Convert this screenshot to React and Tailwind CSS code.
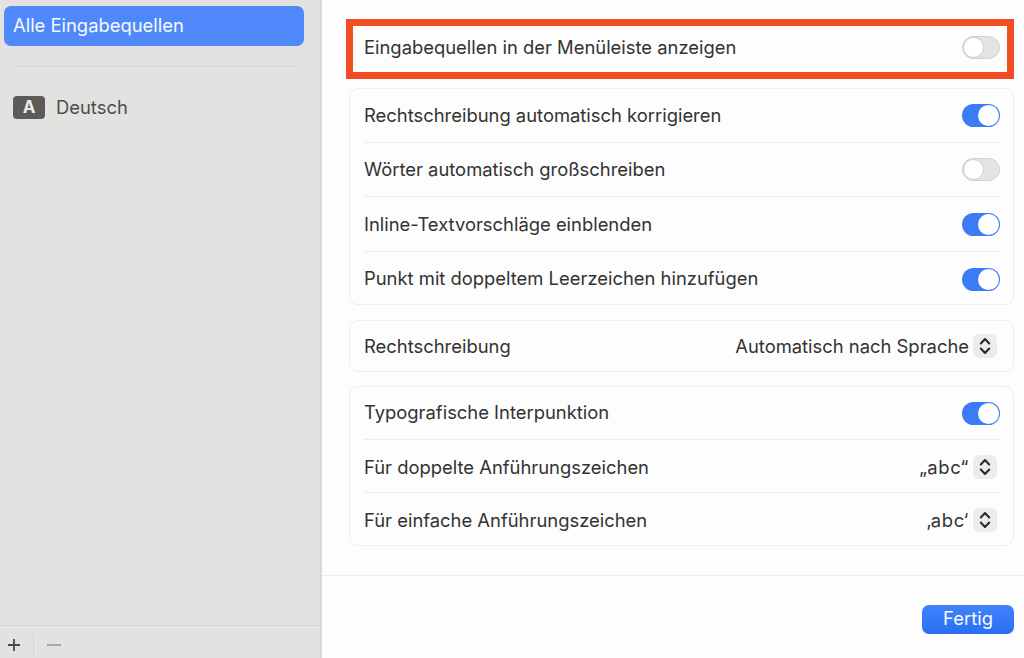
import React from "react";

function Toggle({ on }) {
  return on ? (
    <div className="flex h-[23px] w-[38px] shrink-0 items-center justify-end rounded-full bg-[#3b7bf6] pr-px">
      <div className="h-[21px] w-[21px] rounded-full bg-white" />
    </div>
  ) : (
    <div className="flex h-[23px] w-[38px] shrink-0 items-center rounded-full border border-[#d0d0ce] bg-[#e4e4e2]">
      <div className="h-[21px] w-[21px] rounded-full border border-[#cfcfcf] bg-white" />
    </div>
  );
}

function Stepper() {
  return (
    <div className="mr-[3px] flex h-[24px] w-[24px] shrink-0 items-center justify-center rounded-[6px] bg-[#ececec]">
      <svg width="14" height="20" viewBox="0 0 14 20" fill="none" stroke="#2c2c2c" strokeWidth="2.1" strokeLinecap="round" strokeLinejoin="round">
        <path d="M2.8 7.5 7 3l4.2 4.5" />
        <path d="M2.8 12.5 7 17l4.2-4.5" />
      </svg>
    </div>
  );
}

function Row({ label, h, children }) {
  return (
    <div className={`flex items-center justify-between ${h}`}>
      <span className="whitespace-nowrap">{label}</span>
      {children}
    </div>
  );
}

const Divider = () => <div className="h-px bg-[#ececeb]" />;

const Card = ({ children }) => (
  <div className="rounded-[9px] border border-[#eeeeed] bg-[#fdfdfd] pl-[14px] pr-[13px]">{children}</div>
);

export default function App() {
  return (
    <div className="flex h-[658px] w-[1024px] overflow-hidden bg-[#fdfdfd] font-['Inter',sans-serif] text-[18.4px] text-[#333333]">
      <aside className="flex h-full w-[322px] shrink-0 flex-col border-r-2 border-[#dad9d7] bg-[#e3e2e0]">
        <div className="flex-1 px-[4px] pt-[6px]">
          <div className="flex h-[40px] w-[300px] items-center rounded-[7px] bg-[#4f88fb] pl-[9px] text-[#f6f9ff]">
            Alle Eingabequellen
          </div>
          <div className="mx-[9px] mt-[20px] h-px w-[283px] bg-[#d6d5d3]" />
          <div className="mt-[27px] flex items-center gap-[11px] pl-[9px] text-[#4e4d4b]">
            <div className="flex h-[23px] w-[32px] items-center justify-center rounded-[4px] bg-[#5c5b59] text-[17px] font-bold text-[#ecebe9]">
              A
            </div>
            Deutsch
          </div>
        </div>
        <div className="flex h-[33px] items-center border-t border-[#d3d2d0] pt-[5px]">
          <div className="flex h-[24px] w-[34px] items-center justify-start border-r border-[#d3d2d0] pl-[7px]">
            <svg width="14" height="14" viewBox="0 0 14 14" stroke="#4a4a4a" strokeWidth="1.8" fill="none">
              <path d="M7 1v12M1 7h12" />
            </svg>
          </div>
          <div className="flex w-[40px] items-center justify-center">
            <svg width="14" height="14" viewBox="0 0 14 14" stroke="#a3a2a0" strokeWidth="1.8" fill="none">
              <path d="M0 7h14" />
            </svg>
          </div>
        </div>
      </aside>

      <main className="flex min-w-0 flex-1 flex-col">
        <div className="flex flex-1 flex-col pl-[24px] pr-[10px] pt-[19px]">
          <div className="border-[7px] border-[#f04e23] bg-[#fdfdfd] pl-[11px] pr-[7px]">
            <Row label="Eingabequellen in der Menüleiste anzeigen" h="h-[46px] pb-[3px]">
              <Toggle />
            </Row>
          </div>

          <div className="mt-[9px] pl-[3px]">
            <Card>
              <Row label="Rechtschreibung automatisch korrigieren" h="h-[53px]"><Toggle on /></Row>
              <Divider />
              <Row label="Wörter automatisch großschreiben" h="h-[53px]"><Toggle /></Row>
              <Divider />
              <Row label="Inline-Textvorschläge einblenden" h="h-[54px] pt-px"><Toggle on /></Row>
              <Divider />
              <Row label="Punkt mit doppeltem Leerzeichen hinzufügen" h="h-[52px] pt-[2px]"><Toggle on /></Row>
            </Card>
          </div>

          <div className="mt-[15px] pl-[3px]">
            <Card>
              <Row label="Rechtschreibung" h="h-[50px] pt-px">
                <div className="flex items-center gap-[4px]">
                  <span>Automatisch nach Sprache</span>
                  <Stepper />
                </div>
              </Row>
            </Card>
          </div>

          <div className="mt-[14px] pl-[3px]">
            <Card>
              <Row label="Typografische Interpunktion" h="h-[52px]"><Toggle on /></Row>
              <Divider />
              <Row label="Für doppelte Anführungszeichen" h="h-[52px] pt-[3px]">
                <div className="flex items-center gap-[4px]">
                  <span className="tracking-[0.7px]">„abc“</span>
                  <Stepper />
                </div>
              </Row>
              <Divider />
              <Row label="Für einfache Anführungszeichen" h="h-[52px] pt-[3px]">
                <div className="flex items-center gap-[4px]">
                  <span className="tracking-[0.6px]">‚abc‘</span>
                  <Stepper />
                </div>
              </Row>
            </Card>
          </div>
        </div>

        <div className="flex h-[83px] items-start justify-end border-t border-[#ececeb] pr-[10px] pt-[29px]">
          <button className="flex h-[29px] w-[92px] items-center justify-center rounded-[7px] bg-gradient-to-b from-[#4083fb] to-[#2a6ff5] pb-[2px] text-[#f8faff]">
            Fertig
          </button>
        </div>
      </main>
    </div>
  );
}
